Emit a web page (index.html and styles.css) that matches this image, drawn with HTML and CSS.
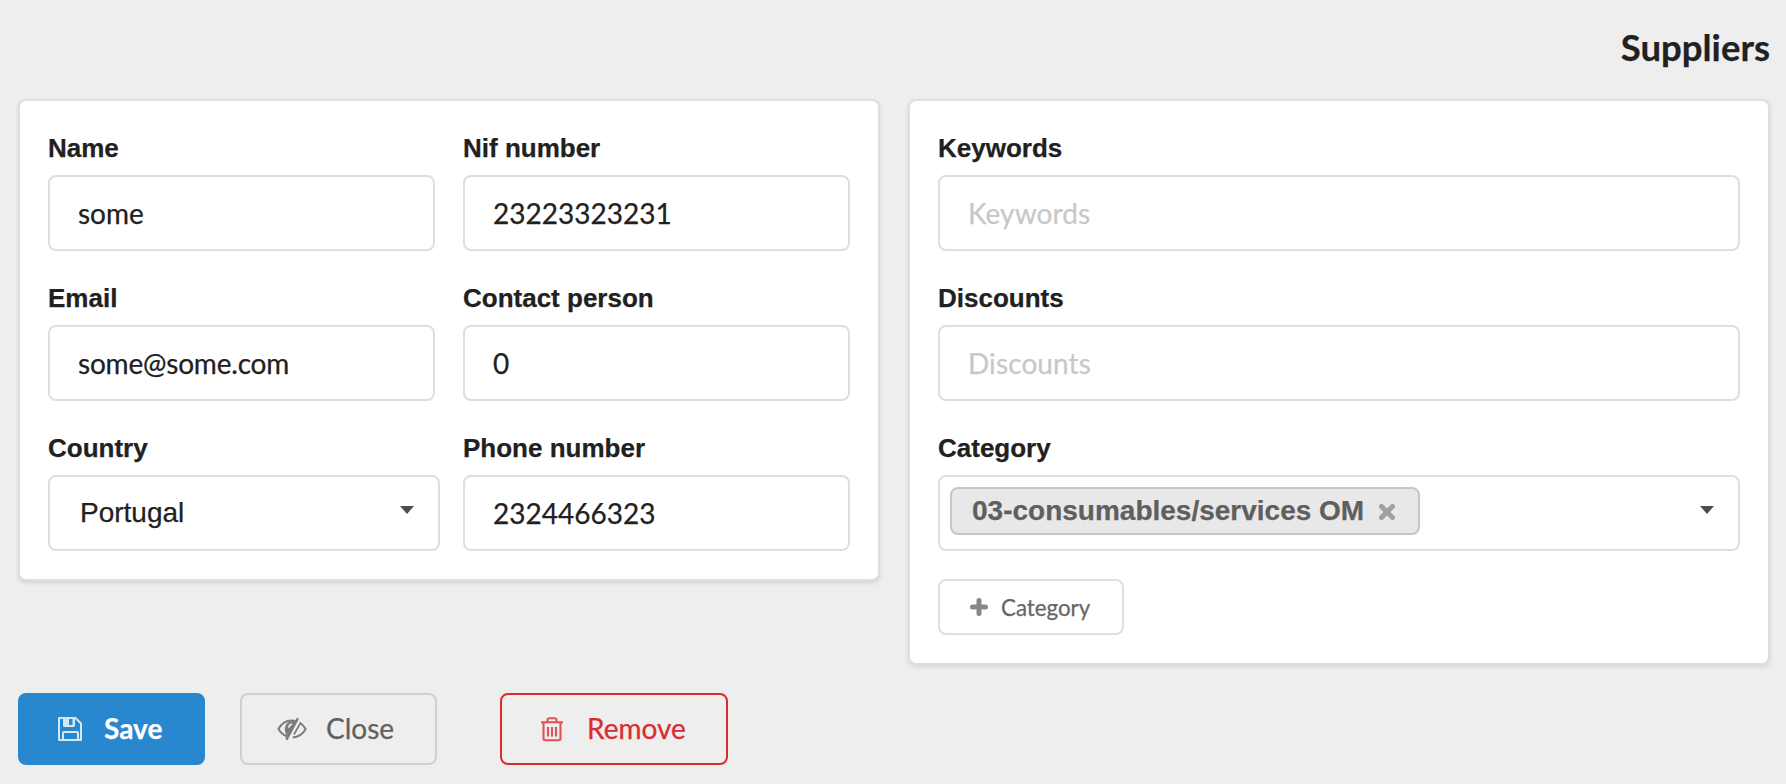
FILE: index.html
```html
<!DOCTYPE html>
<html lang="en">
<head>
<meta charset="utf-8">
<title>Suppliers</title>
<link rel="stylesheet" href="styles.css">
</head>
<body>
<main class="page">
  <h1 class="title"><span>Suppliers</span></h1>
  <div class="columns">
    <section class="card card-left">
      <div class="field"><label>Name</label><div class="input">some</div></div>
      <div class="field"><label>Nif number</label><div class="input">23223323231</div></div>
      <div class="field"><label>Email</label><div class="input email">some@some.com</div></div>
      <div class="field"><label>Contact person</label><div class="input">0</div></div>
      <div class="field"><label>Country</label><div class="input select"><span>Portugal</span><svg class="caret" viewBox="0 0 14 8"><path d="M0 0h14L7 8z"/></svg></div></div>
      <div class="field"><label>Phone number</label><div class="input">2324466323</div></div>
    </section>
    <section class="card card-right">
      <div class="field"><label>Keywords</label><div class="input placeholder">Keywords</div></div>
      <div class="field"><label>Discounts</label><div class="input placeholder">Discounts</div></div>
      <div class="field"><label>Category</label>
        <div class="input multi">
          <span class="tag"><span>03-consumables/services OM</span><svg class="tag-x" viewBox="0 0 18 18"><path d="M3.500 3.500l11 11M14.500 3.500l-11 11"/></svg></span>
          <svg class="caret" viewBox="0 0 14 8"><path d="M0 0h14L7 8z"/></svg>
        </div>
      </div>
      <button class="add"><svg class="plus" viewBox="0 0 18 18"><path d="M9 2.500v13M2.500 9h13"/></svg><span>Category</span></button>
    </section>
  </div>
  <div class="actions">
    <button class="btn save"><svg viewBox="0 0 26 26"><path d="M2 2h16.500l5.500 5.500V24H2z" fill="none" stroke="currentColor" stroke-width="2" stroke-linejoin="round"/><path fill-rule="evenodd" d="M6 2h12v7.500a1.500 1.500 0 0 1-1.500 1.500h-9A1.500 1.500 0 0 1 6 9.500zM12 3v6h3.500V3z"/><path d="M6 24v-7a1 1 0 0 1 1-1h13a1 1 0 0 1 1 1v7" fill="none" stroke="currentColor" stroke-width="2"/></svg><span>Save</span></button>
    <button class="btn close"><svg viewBox="0 0 30 24"><path d="M10 19.300C6.500 18 3.300 15.300 1.500 12 4.500 6.500 9 3.500 14.500 3.500c1.500 0 2.800.2 4 .6M22.500 5.700c2.500 1.400 4.500 3.600 6.200 6.300-3.200 5.500-7.500 8.200-13 8.500" fill="none" stroke="currentColor" stroke-width="2"/><path fill-rule="evenodd" d="M19.700.8l2.300.9L10.500 23.200l-2.200-.9 1.500-4.300C8.300 16.500 7.500 14 8 10.500 8.700 6.500 12 3.800 18.200 3.800zM15 6.200c-2.200.2-3.700 1.800-4 4.300l1.400.6c.2-1.800 1.300-2.900 2.800-3.200z"/><path d="M22.800 7.200l-5.800 10.300" fill="none" stroke="currentColor" stroke-width="1.700"/></svg><span>Close</span></button>
    <button class="btn remove"><svg viewBox="0 0 24 26"><path d="M1 6.300h22M7.500 6V4.300A2 2 0 0 1 9.500 2.200h5a2 2 0 0 1 2 2.100V6M3.500 6v16.500A1.700 1.700 0 0 0 5.200 24.200h13.600a1.700 1.700 0 0 0 1.700-1.700V6M8 11v9.500M12 11v9.500M16 11v9.500" fill="none" stroke="currentColor" stroke-width="2.100"/></svg><span>Remove</span></button>
  </div>
</main>
</body>
</html>
```
FILE: styles.css
```css
* { box-sizing: border-box; }
body { margin: 0; background: #eee; color: #212121; font-family: Lato, sans-serif; -webkit-text-stroke: .25px; }
svg { display: block; flex: none; }
button { background: none; font-family: inherit; cursor: pointer; }
.page { height: 784px; padding: 23px 16px 0 18px; overflow: hidden; }
.title { margin: 0; height: 76px; font-size: 36.5px; line-height: 48px; font-weight: 700; text-align: right; }
.columns { display: grid; grid-template-columns: 862px 862px; gap: 28px; height: 594px; align-items: start; }
.card { background: #fff; border: 2px solid #dededf; border-radius: 8px; padding: 28px; box-shadow: 0 2px 4px rgba(34, 36, 38, .12); }
.card-left { display: grid; grid-template-columns: 387px 387px; column-gap: 28px; height: 482px; }
.card-right { height: 566px; }
.field { height: 150px; padding-top: 4px; }
.field label { display: block; height: 42px; font: 700 26px/30px "Liberation Sans", Arial, sans-serif; }
.field .input { height: 76px; border: 2px solid #dededf; border-radius: 8px; padding: 0 28px; font-size: 28px; line-height: 74px; display: flex; align-items: center; background: #fff; }
.field .placeholder { color: #c8c8c8; letter-spacing: .1px; }
.field .email { letter-spacing: -.2px; }
.field .select { width: 392px; padding: 0 24px 0 30px; font-family: "Liberation Sans", Arial, sans-serif; justify-content: space-between; }
.caret { width: 14px; height: 8px; fill: #4d4d4d; margin-bottom: 7px; }
.field .multi { padding: 0 24px 4px 10px; justify-content: space-between; }
.multi .caret { margin-bottom: 3px; }
.tag { display: flex; align-items: center; width: 470px; height: 48px; border: 2px solid #c6c7c8; border-radius: 8px; background: #e8e8e8; color: #5f5f5f; padding-left: 20px; font: 700 28px/46px "Liberation Sans", Arial, sans-serif; }
.tag-x { width: 18px; height: 18px; margin: 2px 0 0 14px; fill: none; stroke: #a0a0a0; stroke-width: 5; stroke-linecap: round; }
.add { display: flex; align-items: center; width: 186px; height: 56px; padding: 0 0 0 30px; border: 2px solid #dededf; border-radius: 8px; color: #666; font-size: 22.3px; gap: 13px; }
.plus { width: 18px; height: 18px; stroke: #878787; stroke-width: 5; fill: none; stroke-linecap: round; }
.actions { display: flex; }
.btn { display: flex; align-items: center; height: 72px; padding: 0; border: 2px solid #d0d0d1; border-radius: 8px; font-size: 28px; color: #606060; }
.btn svg { height: 26px; fill: currentColor; opacity: .8; }
.btn span { margin-bottom: 2px; }
.save { width: 187px; background: #2987cf; border-color: #2987cf; color: #fff; font-weight: 700; padding-left: 37px; }
.save svg { width: 26px; margin-right: 21px; }
.close { width: 197px; margin-left: 35px; padding-left: 35px; }
.close svg { width: 30px; height: 24px; margin-right: 19px; }
.remove { width: 228px; margin-left: 63px; padding-left: 38px; color: #db2b30; border-color: #db2b30; }
.remove svg { width: 24px; margin-right: 23px; }
```
